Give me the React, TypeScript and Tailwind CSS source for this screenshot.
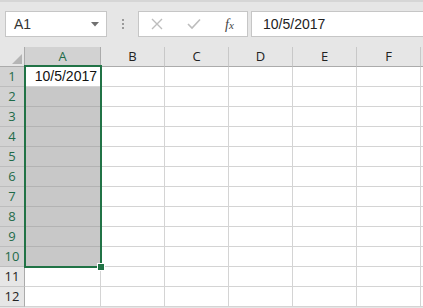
import React from "react";

const cols = ["A", "B", "C", "D", "E", "F", ""];
const rows = [1, 2, 3, 4, 5, 6, 7, 8, 9, 10, 11, 12];

export default function App() {
  return (
    <div
      className="relative w-[423px] h-[308px] overflow-hidden bg-[#e6e6e6] text-[#222]"
      style={{ fontFamily: '"Liberation Sans", Arial, sans-serif' }}
    >
      {/* formula bar */}
      <div className="h-[47px] border-t-2 border-[#d6d6d6] flex items-start pt-[9px] pl-[5px] gap-0">
        <div className="w-[102px] h-[26px] bg-white border border-[#c6c6c6] flex items-center justify-between pl-[8px] pr-[7px]">
          <span className="text-[14px] text-[#333]">A1</span>
          <svg width="8" height="5" viewBox="0 0 8 5">
            <path d="M0 0 L8 0 L4 4.5 Z" fill="#707070" />
          </svg>
        </div>
        <div className="w-[31px] h-[26px] flex flex-col items-center justify-center gap-[2px]">
          <span className="w-[2px] h-[2px] bg-[#9a9a9a]" />
          <span className="w-[2px] h-[2px] bg-[#9a9a9a]" />
          <span className="w-[2px] h-[2px] bg-[#9a9a9a]" />
        </div>
        <div className="w-[110px] h-[26px] bg-white border border-[#c6c6c6] flex items-center pl-[12px]">
          <svg width="12" height="12" viewBox="0 0 12 12">
            <path d="M1 1 L11 11 M11 1 L1 11" stroke="#bdbdbd" strokeWidth="1.4" />
          </svg>
          <svg width="14" height="12" viewBox="0 0 14 12" className="ml-[24px]">
            <path d="M1 6 L5 10 L13 1.5" stroke="#bdbdbd" strokeWidth="1.6" fill="none" />
          </svg>
          <span
            className="ml-[24px] text-[14px] italic text-[#444]"
            style={{ fontFamily: '"Liberation Serif", "Times New Roman", serif' }}
          >
            f<span className="text-[11px]">x</span>
          </span>
        </div>
        <div className="ml-[3px] flex-1 h-[26px] bg-white border border-r-0 border-[#c6c6c6] flex items-center pl-[11px]">
          <span className="text-[14px] text-[#222]">10/5/2017</span>
        </div>
      </div>

      {/* grid */}
      <div
        className="grid bg-white"
        style={{
          gridTemplateColumns: "25px 76px 64px 64px 64px 64px 64px 64px",
          gridAutoRows: "20px",
        }}
      >
        <div className="relative bg-[#e6e6e6] border-r border-b border-[#ababab]">
          <svg width="10" height="10" viewBox="0 0 10 10" className="absolute right-[2px] bottom-[2px]">
            <path d="M10 0 L10 10 L0 10 Z" fill="#b5b5b5" />
          </svg>
        </div>
        {cols.map((c, i) => (
          <div
            key={i}
            className={
              c === "A"
                ? "bg-[#d2d2d2] border-r border-b border-[#ababab] text-[#1e6b49] flex items-center justify-center text-[13px]"
                : "bg-[#e6e6e6] border-r border-b border-r-[#c8c8c8] border-b-[#ababab] text-[#222] flex items-center justify-center text-[13px]"
            }
            style={{ fontFamily: '"Open Sans", "Noto Sans", sans-serif' }}
          >
            {c}
          </div>
        ))}
        {rows.map((r) => (
          <React.Fragment key={r}>
            <div
              className={
                r <= 10
                  ? "bg-[#d2d2d2] border-r border-b border-r-[#ababab] border-b-[#bdbdbd] text-[#1e6b49] flex items-center justify-center text-[13px]"
                  : "bg-[#e6e6e6] border-r border-b border-r-[#ababab] border-b-[#c8c8c8] text-[#222] flex items-center justify-center text-[13px]"
              }
              style={{ fontFamily: '"Open Sans", "Noto Sans", sans-serif' }}
            >
              {r}
            </div>
            {cols.map((c, i) => (
              <div
                key={i}
                className={
                  c === "A" && r > 1 && r <= 10
                    ? "bg-[#c8c8c8] border-r border-b border-[#b3b3b3]"
                    : "bg-white border-r border-b border-[#d4d4d4] flex items-center justify-end pr-[3px] text-[14px] text-[#111]"
                }
              >
                {c === "A" && r === 1 ? "10/5/2017" : null}
              </div>
            ))}
          </React.Fragment>
        ))}
      </div>

      {/* selection */}
      <div className="absolute left-[24px] top-[65px] w-[78px] h-[203px] border-2 border-[#217346] pointer-events-none" />
      <div className="absolute left-[97px] top-[263px] w-[8px] h-[8px] bg-[#217346] border border-white" />
    </div>
  );
}
